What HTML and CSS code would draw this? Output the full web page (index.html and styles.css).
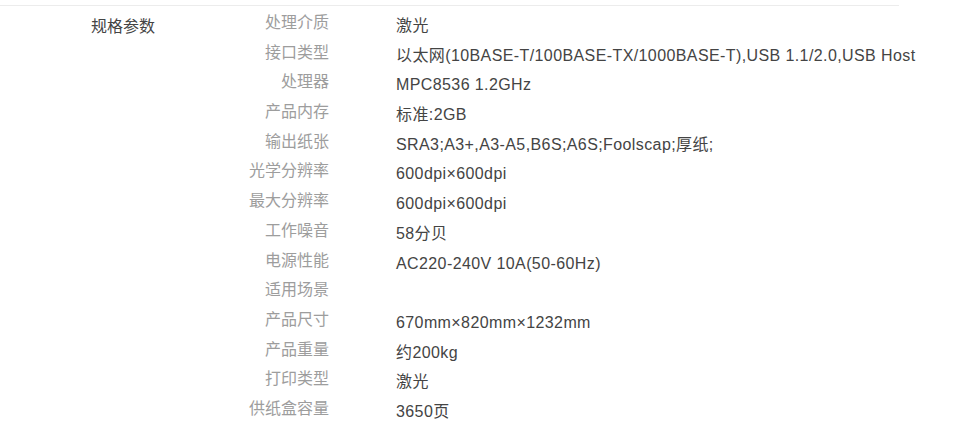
FILE: index.html
```html
<!DOCTYPE html>
<html lang="zh-CN">

<head>
    <meta charset="UTF-8">
    <meta name="viewport" content="width=device-width, initial-scale=1.0">
    <title>规格参数</title>
    <link rel="stylesheet" href="styles.css">
</head>

<body>
    <div class="spec">
        <div class="spec-title">规格参数</div>
        <dl class="spec-list">
            <dt>处理介质</dt><dd>激光</dd>
            <dt>接口类型</dt><dd>以太网(10BASE-T/100BASE-TX/1000BASE-T),USB 1.1/2.0,USB Host</dd>
            <dt>处理器</dt><dd>MPC8536 1.2GHz</dd>
            <dt>产品内存</dt><dd>标准:2GB</dd>
            <dt>输出纸张</dt><dd>SRA3;A3+,A3-A5,B6S;A6S;Foolscap;厚纸;</dd>
            <dt>光学分辨率</dt><dd>600dpi×600dpi</dd>
            <dt>最大分辨率</dt><dd>600dpi×600dpi</dd>
            <dt>工作噪音</dt><dd>58分贝</dd>
            <dt>电源性能</dt><dd>AC220-240V 10A(50-60Hz)</dd>
            <dt>适用场景</dt><dd></dd>
            <dt>产品尺寸</dt><dd>670mm×820mm×1232mm</dd>
            <dt>产品重量</dt><dd>约200kg</dd>
            <dt>打印类型</dt><dd>激光</dd>
            <dt>供纸盒容量</dt><dd>3650页</dd>
        </dl>
    </div>
</body>
</html>
```

FILE: styles.css
```css
body {
    margin: 0;
    background: #fff;
    font-family: "Liberation Sans", Arial, "Noto Sans CJK SC", sans-serif;
    font-size: 16px;
    color: #444;
}

.spec {
    width: 899px;
    margin-top: 5px;
    padding-top: 2px;
    border-top: 1px solid #ececec;
    display: flex;
}

.spec-title {
    flex: 0 0 170px;
    box-sizing: border-box;
    padding-left: 91px;
    padding-top: 7px;
    line-height: 24px;
    color: #444;
}

.spec-list {
    margin: 0;
    display: grid;
    grid-template-columns: 159px 1fr;
    grid-auto-rows: 29.7px;
    column-gap: 67px;
}

.spec-list dt {
    text-align: right;
    line-height: 29.7px;
    color: #9d9d9d;
    white-space: nowrap;
}

.spec-list dd {
    margin: 0;
    padding-top: 6px;
    line-height: 24px;
    letter-spacing: 0.4px;
    white-space: nowrap;
}
```
